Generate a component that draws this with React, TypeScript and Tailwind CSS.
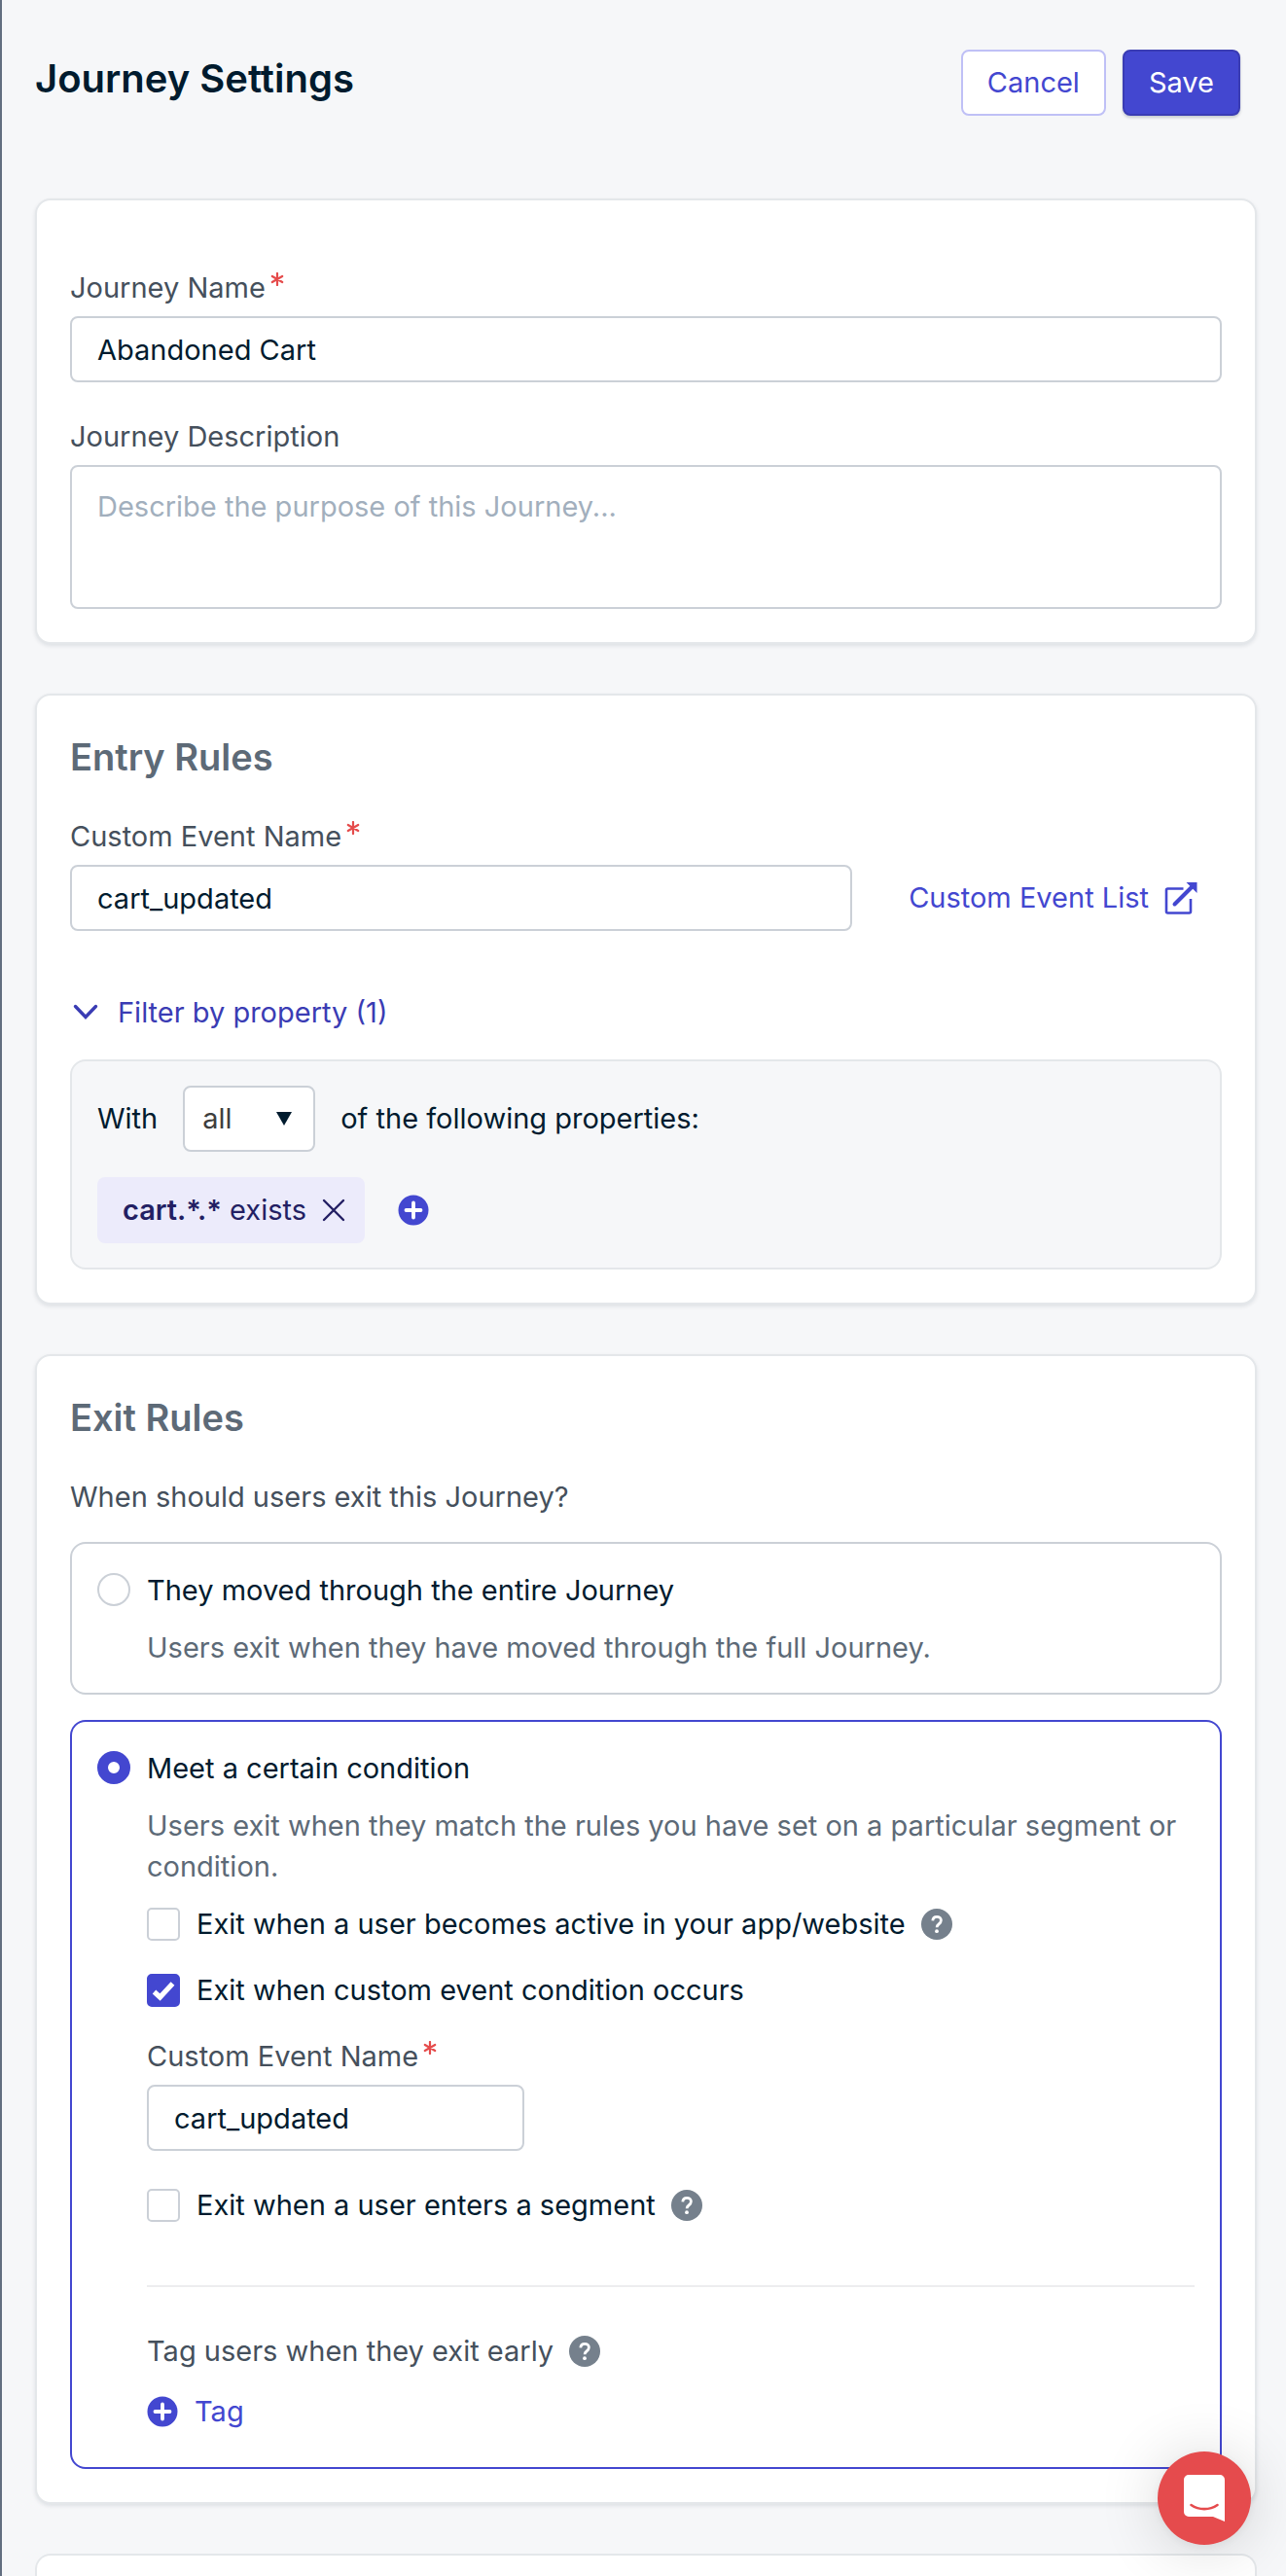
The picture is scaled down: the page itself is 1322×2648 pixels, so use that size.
import { useState } from "react";
import type { ReactNode } from "react";

const inputClass =
  "block h-[68px] w-full rounded-lg border-2 border-[#cbd0d7] bg-white px-[26px] text-[#001b2e] outline-none focus:border-[#4347d0]";

function Card({ children }: { children: ReactNode }) {
  return (
    <section className="rounded-2xl border-2 border-[#e4e7ea] bg-white px-[34px] pb-[34px] shadow-[0_2px_4px_rgba(0,27,46,0.1)]">
      {children}
    </section>
  );
}

function CardTitle({ children }: { children: ReactNode }) {
  return <h2 className="pt-9 text-[38px] leading-[54px] font-semibold text-[#5d6a77]">{children}</h2>;
}

function FieldLabel({ htmlFor, required, children }: { htmlFor: string; required?: boolean; children: ReactNode }) {
  return (
    <label htmlFor={htmlFor} className="mb-2 flex gap-[5px] text-[#45505c]">
      {children}
      {required && (
        <svg viewBox="0 0 14 14" className="mt-[5px] size-[14px]" aria-label="required">
          <path d="M7 1v12M1.8 4l10.4 6M12.2 4L1.8 10" stroke="#e54b4b" strokeWidth="2.2" strokeLinecap="round" />
        </svg>
      )}
    </label>
  );
}

function Radio({ id, checked, onChange }: { id: string; checked: boolean; onChange: () => void }) {
  return (
    <input
      type="radio"
      name="exit-rule"
      id={id}
      checked={checked}
      onChange={onChange}
      className="mt-[3px] size-[34px] shrink-0 appearance-none rounded-full border-2 border-[#cbd0d7] bg-white checked:border-[11px] checked:border-[#4347d0]"
    />
  );
}

function Checkbox({ id, label, defaultChecked, help }: { id: string; label: string; defaultChecked?: boolean; help?: boolean }) {
  return (
    <div className="flex items-center">
      <span className="mr-[17px] grid size-[34px] shrink-0 place-items-center">
        <input
          type="checkbox"
          id={id}
          defaultChecked={defaultChecked}
          className="peer col-start-1 row-start-1 size-[34px] appearance-none rounded-[5px] border-2 border-[#cbd0d7] bg-white checked:border-[#4347d0] checked:bg-[#4347d0]"
        />
        <svg viewBox="0 0 34 34" className="pointer-events-none invisible col-start-1 row-start-1 size-[34px] peer-checked:visible">
          <path d="M7.500 18.500l6 5.500L26.500 10" fill="none" stroke="#fff" strokeWidth="5.200" />
        </svg>
      </span>
      <label htmlFor={id} className="text-[#001b2e]">
        {label}
      </label>
      {help && <HelpButton />}
    </div>
  );
}

function HelpButton() {
  return (
    <button type="button" aria-label="Help" className="ml-4 shrink-0">
      <svg viewBox="0 0 32 32" className="size-8">
        <circle cx="16" cy="16" r="16" fill="#75808c" />
        <path
          d="M11.8 12.4c.2-2.6 1.9-4 4.3-4 2.500 0 4.300 1.500 4.300 3.700 0 1.900-1 2.900-2.400 3.900-1.400 1-1.900 1.600-1.900 3.200"
          fill="none"
          stroke="#fff"
          strokeWidth="2.800"
        />
        <circle cx="16" cy="23.200" r="1.900" fill="#fff" />
      </svg>
    </button>
  );
}

function PlusIcon() {
  return (
    <svg viewBox="0 0 32 32" className="size-8">
      <circle cx="16" cy="16" r="15.500" fill="#4347d0" />
      <path d="M16 8.500v15M8.500 16h15" stroke="#fff" strokeWidth="3.800" strokeLinecap="round" />
    </svg>
  );
}

export default function App() {
  const [exitRule, setExitRule] = useState("condition");
  const [open, setOpen] = useState(true);

  return (
    <div className="flex min-h-screen flex-col border-l-2 border-[#626e80] bg-[#f6f7f9] pr-[30px] pl-[34px] font-['Inter',sans-serif] text-[29px] leading-[42px] text-[#001b2e]">
      <header className="flex items-start justify-between pt-[51px] pr-[17px] pb-[85px]">
        <h1 className="text-[40px] leading-[60px] font-semibold">Journey Settings</h1>
        <div className="flex gap-[17px]">
          <button type="button" className="h-[68px] rounded-lg border-2 border-[#bfc0f6] bg-white px-[25px] text-[#4347d0]">
            Cancel
          </button>
          <button
            type="button"
            className="h-[68px] rounded-lg border-2 border-[#3a3cb4] bg-[#4347d0] px-[25px] text-white shadow-[0_2px_3px_rgba(0,27,46,0.2)]"
          >
            Save
          </button>
        </div>
      </header>

      <main className="flex flex-1 flex-col gap-[51px]">
        <Card>
          <div className="pt-[69px]">
            <FieldLabel htmlFor="journey-name" required>
              Journey Name
            </FieldLabel>
            <input id="journey-name" defaultValue="Abandoned Cart" className={inputClass} />
          </div>
          <div className="mt-[35px]">
            <FieldLabel htmlFor="journey-description">Journey Description</FieldLabel>
            <textarea
              id="journey-description"
              placeholder="Describe the purpose of this Journey..."
              className="block h-[148px] w-full resize-none rounded-lg border-2 border-[#cbd0d7] bg-white px-[26px] py-5 outline-none placeholder:text-[#a2afbd] focus:border-[#4347d0]"
            />
          </div>
        </Card>

        <Card>
          <CardTitle>Entry Rules</CardTitle>
          <div className="mt-[34px] flex items-end gap-[58px]">
            <div className="flex-1">
              <FieldLabel htmlFor="entry-event" required>
                Custom Event Name
              </FieldLabel>
              <input id="entry-event" defaultValue="cart_updated" className={inputClass} />
            </div>
            <a href="#events" className="mr-[25px] flex h-[68px] items-center gap-4 text-[#4347d0]">
              Custom Event List
              <svg viewBox="0 0 34 34" className="size-[34px]" fill="none" stroke="currentColor">
                <path d="M19.500 7.500H3.500a1.500 1.500 0 0 0-1.500 1.500v22a1.500 1.500 0 0 0 1.500 1.500h22a1.500 1.500 0 0 0 1.500-1.500V18" strokeWidth="2.600" />
                <path d="M10.500 23.500L28 6" strokeWidth="4" strokeLinecap="round" />
                <path d="M22.500 1H33.500V12z" fill="currentColor" stroke="none" />
              </svg>
            </a>
          </div>

          <button
            type="button"
            aria-expanded={open}
            onClick={() => setOpen(!open)}
            className="mt-[63px] flex items-center gap-5 pl-[3px] text-[#3a3cb4]"
          >
            <svg viewBox="0 0 26 26" className="size-[26px]" fill="none" stroke="currentColor">
              <path d="M2.500 6.500L13 17.500L23.500 6.500" strokeWidth="3.400" strokeLinecap="round" />
            </svg>
            Filter by property (1)
          </button>

          {open && (
            <div className="mt-[27px] rounded-2xl border-2 border-[#e4e7ea] bg-[#f6f7f9] px-[26px] py-[25px]">
              <div className="flex items-center gap-[26px]">
                <label htmlFor="match-mode">With</label>
                <span className="grid w-[136px] items-center">
                  <select
                    id="match-mode"
                    className="col-start-1 row-start-1 h-[68px] appearance-none rounded-lg border-2 border-[#cbd0d7] bg-white pl-[18px] text-[#3e3e3e]"
                  >
                    <option>all</option>
                    <option>any</option>
                  </select>
                  <svg
                    viewBox="0 0 16 14"
                    className="pointer-events-none col-start-1 row-start-1 mr-6 h-[14px] w-4 justify-self-end"
                  >
                    <path d="M0 0h16L8 14z" fill="#001b2e" />
                  </svg>
                </span>
                <span>of the following properties:</span>
              </div>
              <div className="mt-[26px] flex items-center gap-[34px]">
                <div className="flex h-[68px] items-center rounded-lg bg-[#ecebfb] pr-5 pl-[26px] text-[#231f63]">
                  <span>
                    <b className="font-semibold">cart.*.*</b> exists
                  </span>
                  <button type="button" aria-label="Remove property" className="ml-4">
                    <svg viewBox="0 0 24 24" className="size-6" fill="none" stroke="currentColor">
                      <path d="M2 2l20 20M22 2L2 22" strokeWidth="2.400" strokeLinecap="round" />
                    </svg>
                  </button>
                </div>
                <button type="button" aria-label="Add property">
                  <PlusIcon />
                </button>
              </div>
            </div>
          )}
        </Card>

        <Card>
          <CardTitle>Exit Rules</CardTitle>
          <p className="mt-[34px] text-[#45505c]">When should users exit this Journey?</p>

          <div
            className={`mt-[25px] flex gap-[17px] rounded-2xl border-2 px-[26px] pt-[27px] pb-[25px] ${exitRule === "full" ? "border-[#4347d0]" : "border-[#cbd0d7]"}`}
          >
            <Radio id="exit-full" checked={exitRule === "full"} onChange={() => setExitRule("full")} />
            <div className="flex-1">
              <label htmlFor="exit-full">They moved through the entire Journey</label>
              <p className="mt-[17px] text-[#5d6a77]">Users exit when they have moved through the full Journey.</p>
            </div>
          </div>

          <div
            className={`mt-[26px] flex gap-[17px] rounded-2xl border-2 px-[26px] pt-[27px] pb-9 ${exitRule === "condition" ? "border-[#4347d0]" : "border-[#cbd0d7]"}`}
          >
            <Radio id="exit-condition" checked={exitRule === "condition"} onChange={() => setExitRule("condition")} />
            <div className="flex-1">
              <label htmlFor="exit-condition">Meet a certain condition</label>
              <p className="my-[17px] text-[#5d6a77]">
                Users exit when they match the rules you have set on a particular segment or condition.
              </p>
              <div className="flex flex-col gap-[26px]">
                <Checkbox id="exit-active" label="Exit when a user becomes active in your app/website" help />
                <Checkbox id="exit-event" label="Exit when custom event condition occurs" defaultChecked />
                <div className="w-[388px]">
                  <FieldLabel htmlFor="exit-event-name" required>
                    Custom Event Name
                  </FieldLabel>
                  <input id="exit-event-name" defaultValue="cart_updated" className={inputClass} />
                </div>
              </div>
              <div className="mt-[35px]">
                <Checkbox id="exit-segment" label="Exit when a user enters a segment" help />
              </div>
              <hr className="mt-[61px] mb-[45px] border-t-2 border-[#ededef]" />
              <div className="flex items-center text-[#45505c]">
                Tag users when they exit early
                <HelpButton />
              </div>
              <button type="button" className="mt-5 flex items-center gap-[17px] text-[#4347d0]">
                <PlusIcon />
                Tag
              </button>
            </div>
          </div>
        </Card>

        <section className="flex-1 rounded-t-2xl border-2 border-b-0 border-[#e4e7ea] bg-white" />
      </main>

      <button
        type="button"
        aria-label="Open chat"
        className="fixed right-9 bottom-8 grid size-24 place-items-center rounded-full bg-[#e54b4d] shadow-[0_2px_12px_rgba(0,0,0,0.06),0_4px_64px_rgba(0,0,0,0.16)]"
      >
        <svg viewBox="0 0 42 48" className="h-12 w-[42px]">
          <path d="M5 0h32a5 5 0 0 1 5 5v43l-12-5H5a5 5 0 0 1-5-5V5a5 5 0 0 1 5-5z" fill="#fff" />
          <path d="M7.500 31c8 5.500 19 5.500 27 0" fill="none" stroke="#e54b4d" strokeWidth="2.600" strokeLinecap="round" />
        </svg>
      </button>
    </div>
  );
}
